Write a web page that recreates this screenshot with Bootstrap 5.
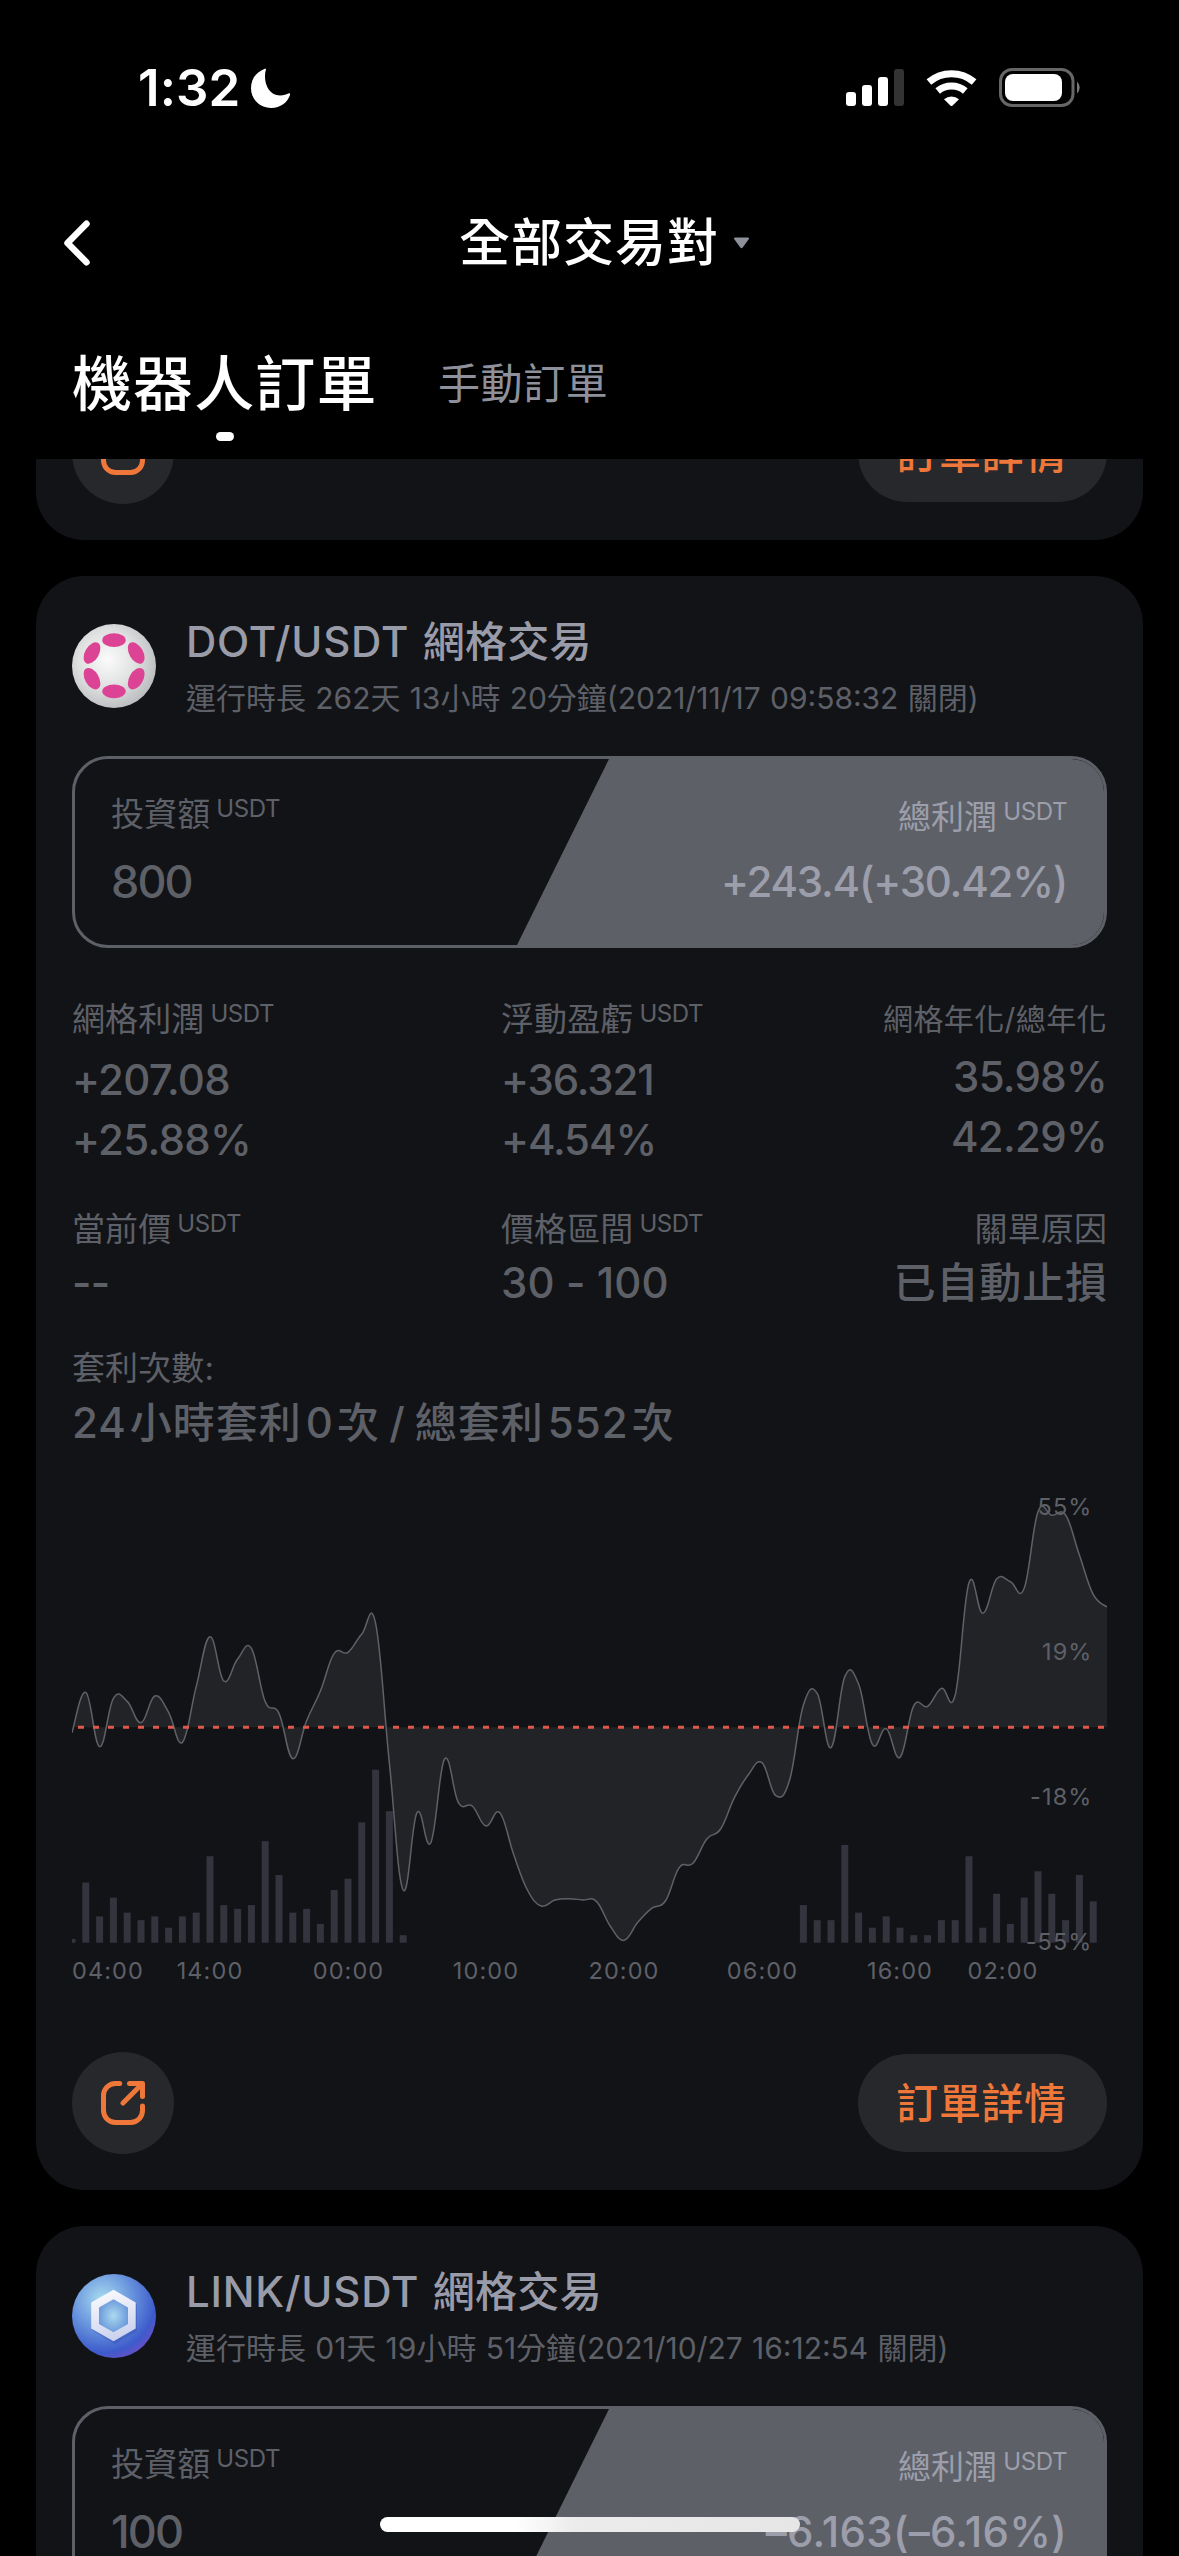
<!DOCTYPE html>
<html lang="zh-Hant" data-bs-theme="dark">
<head>
<meta charset="utf-8">
<meta name="viewport" content="width=device-width, initial-scale=1">
<title>全部交易對</title>
<link href="https://cdn.jsdelivr.net/npm/bootstrap@5.3.0/dist/css/bootstrap.min.css" rel="stylesheet">
<style>
  :root { --panel:#121316; --chip:#27282b; --dim:#5e6068; --soft:#999ca8; --hot:#ee7739; }
  body { width:1179px; height:2556px; overflow:hidden; background:#000; color:#fff;
         font-family:Inter,"Noto Sans CJK TC",sans-serif; }
  svg { display:block; flex:none; }
  .status-bar { height:174px; padding:54px 98px 0 138px; }
  .clock { font-size:51px; font-weight:600; line-height:68px; width:110px; letter-spacing:.1px; white-space:nowrap; }
  .moon { margin:14px 0 0 1px; }
  .signals { margin-top:12px; }
  .title-bar { height:138px; padding:0 56px; }
  .page-title { font-size:51px; font-weight:500; letter-spacing:1px; line-height:70px; padding-right:10px; }
  .caret { margin-left:14px; }
  .tabs-bar { height:147px; padding:30px 0 0 72px; }
  .tab-main { font-size:60px; font-weight:500; letter-spacing:1.1px; line-height:84px; width:304px; white-space:nowrap; }
  .tab-dot { width:18px; height:9px; border-radius:5px; margin:6px 0 0 144px; }
  .tab-alt { font-size:42px; letter-spacing:.6px; line-height:84px; color:#8e919c; margin-left:62px; }
  .feed { height:2097px; overflow:hidden; padding:0 36px; gap:36px; }
  .order { background:var(--panel); border:0; border-radius:48px; padding:0 36px 36px; flex:none; }
  .order-cut { height:200px; margin-top:-119px; }
  .order-head { height:112px; margin:36px 0 32px; gap:30px; }
  .coin { margin-top:12px; }
  .pair { font-size:42px; line-height:60px; font-weight:500; color:var(--soft); letter-spacing:.3px; white-space:nowrap; }
  .pair span { letter-spacing:.8px; margin-right:2px; }
  .runtime { font-size:30px; line-height:52px; color:var(--dim); word-spacing:.8px; white-space:nowrap; }
  .invest { height:192px; border:3px solid var(--dim); border-radius:36px; overflow:hidden; }
  .invest-l { width:540px; flex:none; padding:31px 0 0 36px; color:var(--dim); }
  .invest-r { width:591px; flex:none; margin-left:-102px; padding:34px 37px 0 0; background:var(--dim); color:#9c9fab;
              clip-path:polygon(96px 0, 100% 0, 100% 100%, 4px 100%); text-align:right; }
  .cap-lg { font-size:33px; line-height:48px; letter-spacing:.1px; white-space:nowrap; }
  .cap-sm { font-size:30px; line-height:48px; letter-spacing:.4px; white-space:nowrap; }
  .unit { font-size:24px; line-height:0; vertical-align:9px; margin-left:6px; letter-spacing:-.4px; }
  .sum { font-size:45px; line-height:60px; font-weight:500; margin-top:14px; letter-spacing:-1.9px; white-space:nowrap; }
  .invest-r .sum { font-size:42px; letter-spacing:-1.2px; margin-top:11px; }
  .invest-r .sum-loss { letter-spacing:.3px; }
  .stats { color:var(--dim); }
  .stat-a { width:429px; } .stat-b { width:300px; } .stat-c { width:306px; text-align:right; }
  .num { font-size:42px; line-height:60px; font-weight:500; letter-spacing:-.7px; white-space:nowrap; }
  .stats-1 { margin-top:47px; } .stats-2 { margin-top:35px; } .stats-3 { margin-top:31px; }
  .stats-1 .cap-lg { margin-bottom:7px; } .stats-1 .cap-sm { margin-bottom:4px; }
  .stat-b .num { letter-spacing:-1.1px; }
  .stat-b .span-num { letter-spacing:.1px; }
  .reason { letter-spacing:.9px; margin-right:-1px; }
  .wide { letter-spacing:1px; word-spacing:-3px; margin-top:1px; }
  .wide span { margin:0 3px 0 4px; }
  .wide span:first-child { margin-left:0; }
  .order-foot { height:102px; }
  .round-btn { width:102px; height:102px; background:var(--chip); border-radius:50%; }
  .pill-btn { width:249px; height:98px; line-height:98px; padding:1px 2px 0 0; font-size:42px; font-weight:500; border:0;
              letter-spacing:.6px; background:var(--chip); color:var(--hot); }
  .home-bar { position:absolute; left:380px; top:2517px; width:420px; height:15px; border-radius:8px;
              background:linear-gradient(90deg,#fff 32%,#ececec 46%,#e6e6e6); }
  .axis { font:400 23.5px Inter,sans-serif; letter-spacing:1.1px; fill:var(--dim); }
</style>
<script src="https://cdn.jsdelivr.net/npm/bootstrap@5.3.0/dist/js/bootstrap.bundle.min.js"></script>
</head>
<body class="position-relative">

<svg width="0" height="0" class="position-absolute">
  <symbol id="share" viewBox="0 0 44 44">
    <path d="M18.700 2.500H14.500A12 12 0 0 0 2.500 14.500V29.500A12 12 0 0 0 14.500 41.500H29.500A12 12 0 0 0 41.500 29.500V25M28.500 2.500H41.500V15.500M41 3L22 22" fill="none" stroke="#ee7739" stroke-width="5" stroke-linecap="round" stroke-linejoin="round"/>
  </symbol>
</svg>

<header>
  <div class="status-bar d-flex align-items-start">
    <div class="clock">1:32</div>
    <svg class="moon" width="42" height="42" viewBox="0 0 42 42"><path d="M17 1.300C13.500 13 19 27.500 31 27.500C35 27.500 37.500 26.500 40 25.300C41.300 24.700 41.300 26 40.900 27.300C38.500 34.500 31.500 40 22.300 40C11 40 2 31.500 2 20.300C2 11 7.500 4 14.800 1.200C16 .8 17.300 .5 17 1.300Z" fill="#fff"/></svg>
    <svg class="signals ms-auto" width="240" height="44" viewBox="0 0 240 44">
      <g fill="#fff"><rect x="5" y="26" width="10" height="14" rx="3"/><rect x="21" y="19" width="10" height="21" rx="3"/><rect x="37" y="11" width="10" height="29" rx="3"/><rect x="53" y="3" width="10" height="37" rx="3" opacity=".2"/></g>
      <g fill="none" stroke="#fff" stroke-width="7.200"><path d="M87.900 16A35 35 0 0 1 133.100 16"/><path d="M96.700 25A21.600 21.600 0 0 1 124.300 25"/></g>
      <path d="M103 33.200A11.500 11.500 0 0 1 118 33.200L111.400 39.700Q110.500 40.500 109.600 39.700Z" fill="#fff"/>
      <rect x="159.500" y="3.500" width="72.500" height="36" rx="11.500" fill="none" stroke="#666" stroke-width="3"/>
      <rect x="164" y="8" width="57" height="27" rx="8" fill="#fff"/>
      <path d="M236 15.500A8 8 0 0 1 236 27.500Z" fill="#777"/>
    </svg>
  </div>
  <div class="title-bar d-flex align-items-center">
    <svg width="40" height="50" viewBox="0 0 40 50"><path d="M30.500 5.700L11.500 25L30.500 44.300" fill="none" stroke="#fff" stroke-width="6.500" stroke-linecap="round" stroke-linejoin="round"/></svg>
    <div class="page-title mx-auto d-flex align-items-center">全部交易對
      <svg width="17" height="12" viewBox="0 0 17 12" class="caret"><path d="M2.500 .5H14.500Q17 .5 15.500 2.500L9.700 10.500Q8.500 12 7.300 10.500L1.500 2.500Q0 .5 2.500 .5Z" fill="#8e919c"/></svg>
    </div>
  </div>
  <nav class="tabs-bar d-flex">
    <div><div class="tab-main">機器人訂單</div><div class="tab-dot bg-white"></div></div>
    <div class="tab-alt">手動訂單</div>
  </nav>
</header>

<main class="feed d-flex flex-column">
  <section class="card order order-cut justify-content-end">
    <div class="order-foot d-flex justify-content-between align-items-center">
      <div class="round-btn d-flex align-items-center justify-content-center"><svg width="44" height="44"><use href="#share"/></svg></div>
      <button class="btn rounded-pill pill-btn">訂單詳情</button>
    </div>
  </section>

  <section class="card order">
    <div class="order-head d-flex">
      <svg class="coin" width="84" height="84" viewBox="0 0 84 84">
        <defs><radialGradient id="dotg" cx=".42" cy=".42" r=".62"><stop offset="0" stop-color="#fbfbfb"/><stop offset=".55" stop-color="#dfe0e0"/><stop offset="1" stop-color="#b9bbbd"/></radialGradient></defs>
        <circle cx="42" cy="42" r="42" fill="url(#dotg)"/>
        <g fill="#dd4394">
          <ellipse cx="42" cy="16.200" rx="11.700" ry="6.900"/><ellipse cx="42" cy="67.300" rx="11.700" ry="6.900"/>
          <ellipse cx="20" cy="29" rx="11.700" ry="6.900" transform="rotate(-60 20 29)"/><ellipse cx="64.200" cy="29" rx="11.700" ry="6.900" transform="rotate(60 64.200 29)"/>
          <ellipse cx="20" cy="54.700" rx="11.700" ry="6.900" transform="rotate(60 20 54.700)"/><ellipse cx="64.200" cy="54.700" rx="11.700" ry="6.900" transform="rotate(-60 64.200 54.700)"/>
        </g>
      </svg>
      <div><div class="pair"><span>DOT/USDT</span> 網格交易</div><div class="runtime">運行時長 262天 13小時 20分鐘(2021/11/17 09:58:32 關閉)</div></div>
    </div>
    <div class="invest d-flex">
      <div class="invest-l"><div class="cap-lg">投資額<span class="unit">USDT</span></div><div class="sum">800</div></div>
      <div class="invest-r"><div class="cap-lg">總利潤<span class="unit">USDT</span></div><div class="sum">+243.4(+30.42%)</div></div>
    </div>
    <div class="stats stats-1 d-flex">
      <div class="stat-a"><div class="cap-lg">網格利潤<span class="unit">USDT</span></div><div class="num">+207.08</div><div class="num">+25.88%</div></div>
      <div class="stat-b"><div class="cap-lg">浮動盈虧<span class="unit">USDT</span></div><div class="num">+36.321</div><div class="num">+4.54%</div></div>
      <div class="stat-c"><div class="cap-sm">網格年化/總年化</div><div class="num">35.98%</div><div class="num">42.29%</div></div>
    </div>
    <div class="stats stats-2 d-flex">
      <div class="stat-a"><div class="cap-lg">當前價<span class="unit">USDT</span></div><div class="num">--</div></div>
      <div class="stat-b"><div class="cap-lg">價格區間<span class="unit">USDT</span></div><div class="num span-num">30 - 100</div></div>
      <div class="stat-c"><div class="cap-lg">關單原因</div><div class="num reason">已自動止損</div></div>
    </div>
    <div class="stats stats-3"><div class="cap-lg">套利次數:</div><div class="num wide"><span>24</span>小時套利<span>0</span>次 / 總套利<span>552</span>次</div></div>

    <svg id="chart" width="1035" height="599" viewBox="0 0 1035 599"></svg>

    <div class="order-foot d-flex justify-content-between align-items-center">
      <div class="round-btn d-flex align-items-center justify-content-center"><svg width="44" height="44"><use href="#share"/></svg></div>
      <button class="btn rounded-pill pill-btn">訂單詳情</button>
    </div>
  </section>

  <section class="card order">
    <div class="order-head d-flex">
      <svg class="coin" width="84" height="84" viewBox="0 0 84 84">
        <defs>
          <radialGradient id="lkg" cx=".36" cy=".3" r=".75"><stop offset="0" stop-color="#a9dcf0"/><stop offset=".5" stop-color="#6590dc"/><stop offset=".85" stop-color="#3d5bcb"/><stop offset="1" stop-color="#6650c8"/></radialGradient>
          <radialGradient id="lkh"><stop offset="0" stop-color="#add9ef"/><stop offset="1" stop-color="#6d9cdc"/></radialGradient>
          <linearGradient id="lkw" x2=".3" y2="1"><stop offset="0" stop-color="#fff"/><stop offset="1" stop-color="#cdd3ef"/></linearGradient>
        </defs>
        <circle cx="42" cy="42" r="42" fill="url(#lkg)"/>
        <path d="M42 17L65 30V57L43 70L20 56Z" fill="#2d4ba8" opacity=".35"/>
        <path d="M41.500 15.700L63.700 28.500V54.500L41.500 67.300L19.200 54.500V28.500Z" fill="url(#lkw)"/>
        <path d="M41.500 25.300L56 33.500V50L41.500 58.200L27 50V33.500Z" fill="url(#lkh)"/>
      </svg>
      <div><div class="pair"><span>LINK/USDT</span> 網格交易</div><div class="runtime">運行時長 01天 19小時 51分鐘(2021/10/27 16:12:54 關閉)</div></div>
    </div>
    <div class="invest d-flex">
      <div class="invest-l"><div class="cap-lg">投資額<span class="unit">USDT</span></div><div class="sum">100</div></div>
      <div class="invest-r"><div class="cap-lg">總利潤<span class="unit">USDT</span></div><div class="sum sum-loss">–6.163(–6.16%)</div></div>
    </div>
  </section>
</main>
<div class="home-bar"></div>

<script>
  // Profit curve samples and arbitrage counts, one per 13.8px step
  const step = 13.8, zero = 274.3, base = 489.7;
  const curve = [758,637,800,655,664,728,648,697,787,620,470,603,537,505,665,700,836,722,633,520,517,462,430,850,
    1230,998,1088,837,968,978,1038,998,1123,1230,1278,1260,1256,1260,1264,1338,1381,1327,1285,1263,1163,1150,1077,1047,
    953,885,848,947,900,675,640,803,590,612,793,746,832,677,679,625,645,308,400,297,305,325,95,106,105,225,343,381];
  const counts = {0:1,1:16,2:7,3:12,4:8,5:6,6:7,7:4,8:7,9:8,10:23,11:10,12:9,13:10,14:27,15:18,16:8,17:9,18:5,19:14,20:17,
    21:32,22:46,23:35,24:2,53:10,54:6,55:6,56:26,57:8,58:4,59:7,60:4,61:2,62:2,63:6,64:6,65:23,66:4,67:13,68:5,69:12,
    70:19,71:13,72:6,73:18,74:11};
  const pts = curve.map((v, i) => [i * step, 27 + v / 3]);
  const at = i => pts[Math.max(0, Math.min(pts.length - 1, i))];
  let line = `M${pts[0]}`;
  for (let i = 1; i < pts.length; i++) {
    const a = at(i - 2), b = at(i - 1), c = at(i), d = at(i + 1), k = .2;
    line += `C${b[0] + (c[0] - a[0]) * k} ${b[1] + (c[1] - a[1]) * k} ${c[0] - (d[0] - b[0]) * k} ${c[1] - (d[1] - b[1]) * k} ${c[0]} ${c[1]}`;
  }
  let out = `<path d="${line}V${zero}H0Z" fill="#222327"/>`;
  for (const [i, n] of Object.entries(counts)) {
    const h = n * 3.76;
    out += `<rect x="${i * step - 3.5}" y="${base - h}" width="7" height="${h}" fill="#33343e"/>`;
  }
  out += `<path d="${line}" fill="none" stroke="#606168" stroke-width="1.5"/>`;
  out += `<path d="M6 ${zero}H1035" stroke="#e0584c" stroke-width="3" stroke-dasharray="6 9"/>`;
  [['55%',62],['19%',207],['-18%',352],['-55%',497]].forEach(([t, y]) =>
    out += `<text class="axis" x="1020.500" y="${y}" text-anchor="end">${t}</text>`);
  [['04:00',36],['14:00',138],['00:00',276.5],['10:00',414],['20:00',552],['06:00',690.5],['16:00',828],['02:00',931]].forEach(([t, x]) =>
    out += `<text class="axis" x="${x}" y="526" text-anchor="middle">${t}</text>`);
  document.getElementById('chart').innerHTML = out;
</script>
</body>
</html>
